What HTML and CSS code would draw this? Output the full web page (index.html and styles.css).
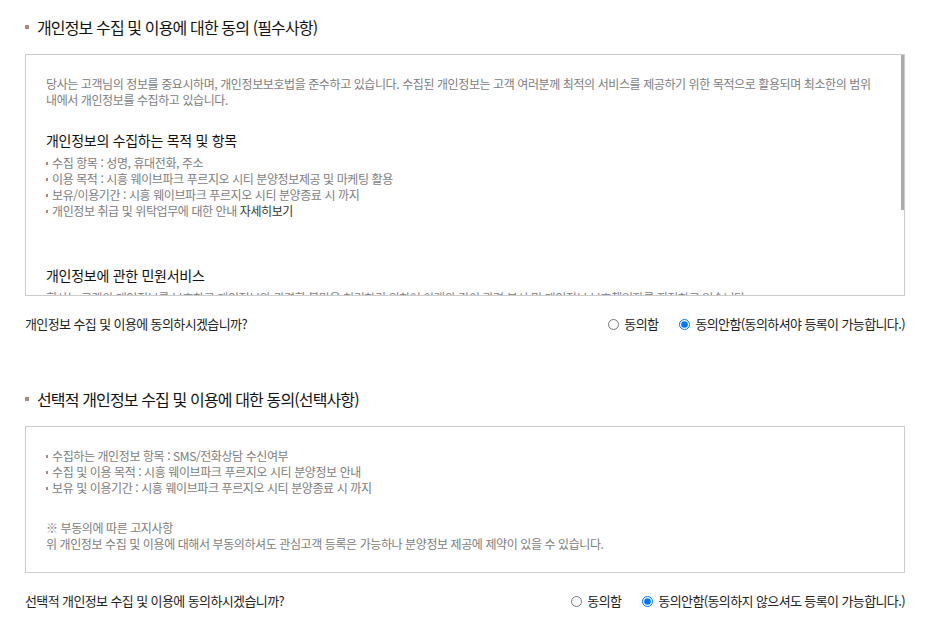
FILE: index.html
```html
<!DOCTYPE html>
<html lang="ko">
<head>
  <meta charset="UTF-8">
  <meta name="viewport" content="width=device-width, initial-scale=1.0">
  <title>개인정보 수집 및 이용 동의</title>
  <link rel="stylesheet" href="styles.css">
</head>
<body>
  <div class="agree-wrap">

    <!-- 필수 동의 -->
    <div class="agree-sec">
      <h3 class="agree-tit">개인정보 수집 및 이용에 대한 동의 (필수사항)</h3>
      <div class="scroll-wrap">
        <div class="agree-box scroll">
          <p class="desc">당사는 고객님의 정보를 중요시하며, 개인정보보호법을 준수하고 있습니다. 수집된 개인정보는 고객 여러분께 최적의 서비스를 제공하기 위한 목적으로 활용되며 최소한의 범위 내에서 개인정보를 수집하고 있습니다.</p>

          <h4>개인정보의 수집하는 목적 및 항목</h4>
          <ul class="dot-list">
            <li>수집 항목 : 성명, 휴대전화, 주소</li>
            <li>이용 목적 : 시흥 웨이브파크 푸르지오 시티 분양정보제공 및 마케팅 활용</li>
            <li>보유/이용기간 : 시흥 웨이브파크 푸르지오 시티 분양종료 시 까지</li>
            <li>개인정보 취급 및 위탁업무에 대한 안내 <a href="#" class="more">자세히보기</a></li>
          </ul>

          <h4 class="gap">개인정보에 관한 민원서비스</h4>
          <p class="desc">회사는 고객의 개인정보를 보호하고 개인정보와 관련한 불만을 처리하기 위하여 아래와 같이 관련 부서 및 개인정보 보호책임자를 지정하고 있습니다.</p>
          <ul class="dot-list">
            <li>개인정보 보호책임자 : 분양사무소 담당자</li>
            <li>전화번호 : 분양문의 대표번호</li>
          </ul>
          <p class="desc">기타 개인정보침해에 대한 신고나 상담이 필요하신 경우에는 개인정보침해신고센터(privacy.kisa.or.kr / 국번없이 118)로 문의하시기 바랍니다.</p>
        </div>
        <span class="scroll-thumb"></span>
      </div>
      <div class="agree-q">
        <p>개인정보 수집 및 이용에 동의하시겠습니까?</p>
        <div class="radios">
          <label><input type="radio" name="agree1">동의함</label>
          <label><input type="radio" name="agree1" checked>동의안함(동의하셔야 등록이 가능합니다.)</label>
        </div>
      </div>
    </div>

    <!-- 선택 동의 -->
    <div class="agree-sec">
      <h3 class="agree-tit">선택적 개인정보 수집 및 이용에 대한 동의(선택사항)</h3>
      <div class="agree-box">
        <ul class="dot-list">
          <li>수집하는 개인정보 항목 : SMS/전화상담 수신여부</li>
          <li>수집 및 이용 목적 : 시흥 웨이브파크 푸르지오 시티 분양정보 안내</li>
          <li>보유 및 이용기간 : 시흥 웨이브파크 푸르지오 시티 분양종료 시 까지</li>
        </ul>
        <p class="desc notice">※ 부동의에 따른 고지사항<br>위 개인정보 수집 및 이용에 대해서 부동의하셔도 관심고객 등록은 가능하나 분양정보 제공에 제약이 있을 수 있습니다.</p>
      </div>
      <div class="agree-q">
        <p>선택적 개인정보 수집 및 이용에 동의하시겠습니까?</p>
        <div class="radios">
          <label><input type="radio" name="agree2">동의함</label>
          <label><input type="radio" name="agree2" checked>동의안함(동의하지 않으셔도 등록이 가능합니다.)</label>
        </div>
      </div>
    </div>

  </div>
</body>
</html>
```

FILE: styles.css
```css
/* styles.css */
body {
  margin: 0;
  font-family: "Noto Sans CJK KR", "Noto Sans", sans-serif;
  color: #222;
  background: #fff;
}

.agree-wrap {
  width: 880px;
  padding: 16px 30px 0 25px;
}

.agree-sec + .agree-sec {
  margin-top: 53px;
}

/* 섹션 타이틀 */
.agree-tit {
  display: flex;
  align-items: center;
  gap: 8px;
  margin: 0;
  font-size: 16px;
  line-height: 22px;
  font-weight: 400;
  color: #111;
  letter-spacing: -0.054em;
}

.agree-tit::before {
  content: "";
  width: 4px;
  height: 4px;
  background: #a58b7a;
}

/* 약관 박스 */
.agree-box {
  margin-top: 16px;
  padding: 21px 20px 20px;
  border: 1px solid #ccc;
  font-size: 12px;
  line-height: 16px;
  color: #7d7d7d;
  letter-spacing: -0.034em;
}

.scroll-wrap {
  position: relative;
  margin-top: 16px;
}

.scroll-wrap .agree-box {
  margin-top: 0;
}

.agree-box.scroll {
  box-sizing: border-box;
  height: 242px;
  overflow-y: auto;
  scrollbar-width: none;
}

.agree-box.scroll::-webkit-scrollbar {
  display: none;
}

/* 스크롤 위치 표시 */
.scroll-thumb {
  position: absolute;
  top: 1px;
  right: 1px;
  width: 3px;
  height: 155px;
  background: #aaa;
}

.agree-box p {
  margin: 0;
}

.agree-box h4 {
  margin: 22px 0 5px;
  font-size: 14px;
  line-height: 20px;
  font-weight: 400;
  color: #111;
  letter-spacing: -0.02em;
}

.agree-box h4.gap {
  margin-top: 46px;
}

.dot-list {
  margin: 0;
  padding: 0;
  list-style: none;
}

.dot-list li {
  position: relative;
  padding-left: 6px;
}

.dot-list li::before {
  content: "";
  position: absolute;
  left: 0;
  top: 7px;
  width: 2px;
  height: 3px;
  background: #a58b7a;
}

.dot-list + .desc {
  margin-top: 8px;
}

.desc.notice {
  margin-top: 24px;
}

.more {
  color: #333;
  text-decoration: none;
}

/* 동의 여부 */
.agree-q {
  display: flex;
  justify-content: space-between;
  align-items: center;
  margin-top: 17px;
  font-size: 13px;
  line-height: 22px;
  color: #222;
  letter-spacing: -0.047em;
}

.agree-q p {
  margin: 0;
}

.radios {
  display: flex;
  gap: 21px;
}

.radios label {
  display: flex;
  align-items: center;
  gap: 5px;
}

.radios input {
  width: 11px;
  height: 11px;
  margin: 0;
}
```
